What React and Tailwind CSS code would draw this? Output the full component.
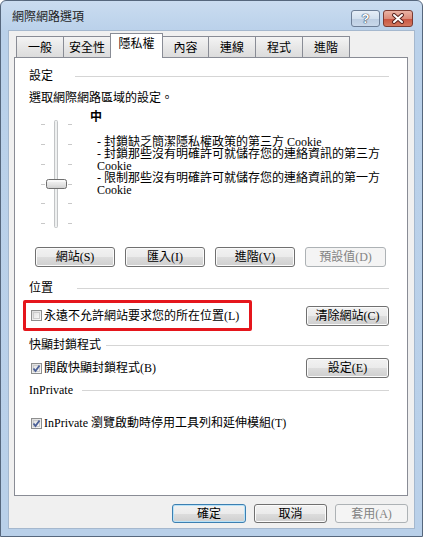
import React from "react";

const FONT = "font-['Liberation_Serif','Noto_Sans_CJK_TC',serif]";

const TABS = [
  { label: "一般", w: "w-[48px]" },
  { label: "安全性", w: "w-[48px]" },
  { label: "隱私權", w: "w-[53px]", active: true },
  { label: "內容", w: "w-[47px]" },
  { label: "連線", w: "w-[48px]" },
  { label: "程式", w: "w-[48px]" },
  { label: "進階", w: "w-[48px]" },
];

function Btn({ children, w = "w-[80px]", h = "h-[20px]", disabled, primary }) {
  let look =
    "border-[#707070] text-black bg-[linear-gradient(#f2f2f2_0%,#ebebeb_50%,#dddddd_51%,#cfcfcf_100%)] shadow-[inset_0_0_0_1px_#fbfbfb]";
  if (primary)
    look =
      "border-[#3c7fb1] text-black bg-[linear-gradient(#f2f2f2_0%,#ebebeb_50%,#dddddd_51%,#cfcfcf_100%)] shadow-[inset_0_0_0_1px_#b7e2f8]";
  if (disabled) look = "border-[#adb2b5] text-[#838383] bg-[#f4f4f4]";
  return (
    <div
      className={`${w} ${h} shrink-0 flex items-center justify-center rounded-[3px] border text-[12px] leading-none ${look}`}
    >
      {children}
    </div>
  );
}

function Check({ checked }) {
  return (
    <div className="w-[11px] h-[11px] shrink-0 border border-[#8e8f8f] bg-[linear-gradient(135deg,#dcdcdc,#fbfbfb)] p-px">
      <div className="w-full h-full border border-[#cbcbcb] bg-[linear-gradient(135deg,#e3e3e3,#f6f6f6)] flex items-center justify-center">
        {checked && (
          <svg width="9" height="9" viewBox="0 0 9 9" className="-m-[2px]">
            <path d="M1.5 4.5 L3.5 7 L7.5 1.5" fill="none" stroke="#4a5f97" strokeWidth="1.8" />
          </svg>
        )}
      </div>
    </div>
  );
}

function Group({ label, w }) {
  return (
    <div className="flex items-center h-[14px]">
      <span className={`${w} shrink-0 leading-[14px]`}>{label}</span>
      <div className="flex-1 h-px bg-[#d5d5d5]" />
    </div>
  );
}

function Slider() {
  const ticks = [14, 34, 54, 74, 93, 113];
  return (
    <svg width="36" height="122" viewBox="0 0 36 122" className="ml-[10px] shrink-0">
      <defs>
        <linearGradient id="thumb" x1="0" y1="0" x2="0" y2="1">
          <stop offset="0" stopColor="#f6f6f6" />
          <stop offset="0.5" stopColor="#e6e6e6" />
          <stop offset="1" stopColor="#cfcfcf" />
        </linearGradient>
      </defs>
      <rect x="15.5" y="10.5" width="3" height="107" rx="1" fill="#eef0f0" stroke="#c2c4c6" />
      {ticks.map((y) => (
        <g key={y} stroke="#c8c8c8">
          <line x1="2" y1={y + 0.5} x2="6" y2={y + 0.5} />
          <line x1="29" y1={y + 0.5} x2="33" y2={y + 0.5} />
        </g>
      ))}
      <rect x="7.5" y="69.5" width="20" height="9" rx="2" fill="url(#thumb)" stroke="#6f6f6f" />
      <line x1="9" y1="71" x2="26" y2="71" stroke="#fff" />
    </svg>
  );
}

export default function App() {
  return (
    <div
      className={`${FONT} w-[423px] h-[537px] flex flex-col border border-[#56677d] rounded-t-[6px] bg-[linear-gradient(#cadcf0,#bad1ea_30px,#b9d0e9)] text-[12px] text-black overflow-hidden`}
    >
      {/* title bar */}
      <div className="h-[29px] shrink-0 flex items-start pl-[11px] pr-[9px]">
        <span className="mt-[9px] leading-[14px] text-[#1e1e1e]">網際網路選項</span>
        <div className="ml-auto mt-[9px] flex gap-[3px]">
          <div className="w-[29px] h-[17px] rounded-[3px] border border-[#6d7e96] bg-[linear-gradient(#e6eef7_0%,#d3e0ee_50%,#bccde1_51%,#c9d8ea_100%)] flex items-center justify-center">
            <span className="font-['Liberation_Sans',sans-serif] font-bold text-[13px] leading-none text-white [text-shadow:0_0_1px_#2c3e57,0_0_1px_#2c3e57,0_0_1px_#2c3e57]">
              ?
            </span>
          </div>
          <div className="w-[30px] h-[17px] rounded-[3px] border border-[#7b3b32] bg-[linear-gradient(#eab3a5_0%,#dc8c7a_50%,#c9523f_51%,#d3785f_100%)] flex items-center justify-center">
            <svg width="14" height="11" viewBox="0 0 14 11">
              <path d="M3 2 L11 9 M11 2 L3 9" stroke="#5a2520" strokeWidth="4" strokeLinecap="round" />
              <path d="M3 2 L11 9 M11 2 L3 9" stroke="#fff" strokeWidth="2" strokeLinecap="round" />
            </svg>
          </div>
        </div>
      </div>

      {/* client */}
      <div className="flex-1 mx-[7px] mb-[7px] border border-[#a5b8ce] bg-[#f0f0f0] flex flex-col pl-[5px] pr-[6px] pt-[2px]">
        {/* tabs */}
        <div className="h-[24px] flex items-end ml-[2px]">
          {TABS.map((t, i) =>
            t.active ? (
              <div
                key={t.label}
                className={`${t.w} h-[25px] -mb-px -ml-px relative z-10 border border-b-0 border-[#898c95] bg-white flex justify-center pt-[3px] leading-[14px]`}
              >
                {t.label}
              </div>
            ) : (
              <div
                key={t.label}
                className={`${t.w} h-[21px] ${i > 0 ? "-ml-px" : ""} border border-b-0 border-[#898c95] bg-[linear-gradient(#f4f4f4,#e7e7e7_50%,#dcdcdc)] flex justify-center pt-[4px] leading-[14px]`}
              >
                {t.label}
              </div>
            ),
          )}
        </div>

        {/* panel */}
        <div className="h-[439px] border border-[#898c95] bg-white flex flex-col pl-[14px] pr-[18px]">
          <div className="mt-[11px]">
            <Group label="設定" w="w-[46px]" />
          </div>
          <div className="mt-[8px] leading-[14px]">選取網際網路區域的設定。</div>

          <div className="mt-[5px] h-[122px] flex">
            <Slider />
            <div className="ml-[15px] flex flex-col">
              <div className="font-bold leading-[14px]">中</div>
              <div className="mt-[12px] pl-[7px] leading-[12px] whitespace-nowrap">
                <div>- 封鎖缺乏簡潔隱私權政策的第三方 Cookie</div>
                <div>- 封鎖那些沒有明確許可就儲存您的連絡資訊的第三方</div>
                <div>Cookie</div>
                <div>- 限制那些沒有明確許可就儲存您的連絡資訊的第一方</div>
                <div>Cookie</div>
              </div>
            </div>
          </div>

          <div className="mt-[15px] flex gap-[10px] pl-[6px]">
            <Btn>網站(S)</Btn>
            <Btn>匯入(I)</Btn>
            <Btn>進階(V)</Btn>
            <Btn w="w-[81px]" disabled>
              預設值(D)
            </Btn>
          </div>

          <div className="mt-[14px]">
            <Group label="位置" w="w-[48px]" />
          </div>

          <div className="mt-[5px] h-[31px] flex items-center justify-between">
            <div className="-ml-[6px] w-[229px] h-[31px] border-[3px] border-[#e5161c] rounded-[2px] flex items-center gap-[2px] pl-[5px]">
              <Check />
              <span className="leading-[14px] whitespace-nowrap">永遠不允許網站要求您的所在位置(L)</span>
            </div>
            <Btn w="w-[83px]">清除網站(C)</Btn>
          </div>

          <div className="mt-[7px]">
            <Group label="快顯封鎖程式" w="w-[77px]" />
          </div>

          <div className="mt-[6px] h-[20px] flex items-center justify-between">
            <div className="flex items-center gap-[2px] pl-[2px]">
              <Check checked />
              <span className="leading-[14px]">開啟快顯封鎖程式(B)</span>
            </div>
            <Btn w="w-[83px]">設定(E)</Btn>
          </div>

          <div className="mt-[5px]">
            <Group label="InPrivate" w="w-[53px]" />
          </div>

          <div className="mt-[19px] h-[14px] flex items-center gap-[2px] pl-[2px]">
            <Check checked />
            <span className="leading-[14px] whitespace-nowrap">InPrivate 瀏覽啟動時停用工具列和延伸模組(T)</span>
          </div>
        </div>

        {/* dialog buttons */}
        <div className="mt-[8px] flex justify-end gap-[8px]">
          <Btn w="w-[74px]" h="h-[19px]" primary>
            確定
          </Btn>
          <Btn w="w-[73px]" h="h-[19px]">
            取消
          </Btn>
          <Btn w="w-[73px]" h="h-[19px]" disabled>
            套用(A)
          </Btn>
        </div>
      </div>
    </div>
  );
}
